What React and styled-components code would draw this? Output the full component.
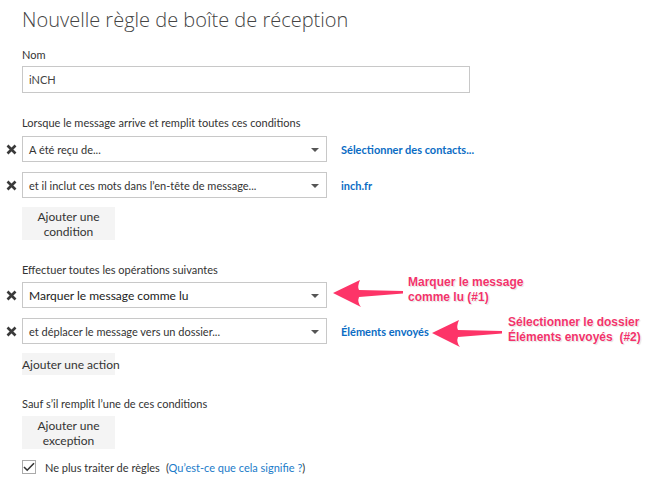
import React from 'react';
import styled, { createGlobalStyle } from 'styled-components';

const GlobalStyle = createGlobalStyle`
  body {
    margin: 0;
    background: #fff;
    font-family: Lato, 'Open Sans', sans-serif;
    color: #333;
  }
`;

const Page = styled.div`
  position: relative;
  width: 670px;
  height: 495px;
  padding: 5px 0 0 22px;
  box-sizing: border-box;
  overflow: hidden;
`;

const Title = styled.h1`
  margin: 0;
  font-family: 'Open Sans', sans-serif;
  font-weight: 300;
  font-size: 20px;
  line-height: 30px;
  color: #444;
`;

const Label = styled.div`
  font-size: 11px;
  line-height: 16px;
  color: #333;
  margin-top: ${(p) => p.$top || 0}px;
`;

const TextInput = styled.div`
  width: 448px;
  height: 27px;
  box-sizing: border-box;
  border: 1px solid #c8c8c8;
  margin-top: 3px;
  padding-left: 6px;
  display: flex;
  align-items: center;
  font-size: 11px;
  color: #444;
`;

const Rows = styled.div`
  display: flex;
  flex-direction: column;
  gap: 10px;
  margin-top: ${(p) => p.$top || 5}px;
  margin-left: -22px;
`;

const Row = styled.div`
  display: flex;
  align-items: center;
  height: 26px;
`;

const Remove = styled.div`
  width: 22px;
  display: flex;
  justify-content: center;
  align-items: center;
`;

const Select = styled.div`
  position: relative;
  width: 305px;
  height: 26px;
  box-sizing: border-box;
  border: 1px solid #c8c8c8;
  padding-left: 6px;
  display: flex;
  align-items: center;
  font-size: ${(p) => (p.$big ? 12 : 11)}px;
  color: ${(p) => (p.$big ? '#222' : '#333')};

  &::after {
    content: '';
    position: absolute;
    right: 7px;
    top: 11px;
    border-left: 4px solid transparent;
    border-right: 4px solid transparent;
    border-top: 4px solid #555;
  }
`;

const SideLink = styled.a`
  margin-left: 14px;
  font-size: 11px;
  font-weight: 700;
  color: #0a6cc4;
  text-decoration: none;
`;

const Button = styled.div`
  width: 93px;
  box-sizing: border-box;
  background: #f4f4f4;
  text-align: center;
  font-size: 12px;
  line-height: 15px;
  color: #333;
  white-space: nowrap;
  padding: ${(p) => (p.$single ? '4px 0 3px' : '2px 0 1px')};
  margin-top: ${(p) => p.$top || 0}px;
`;

const CheckRow = styled.div`
  display: flex;
  align-items: center;
  margin-top: 11px;
  font-size: 11px;
  color: #333;
`;

const Box = styled.div`
  width: 14px;
  height: 14px;
  box-sizing: border-box;
  border: 1px solid #aaa;
  display: flex;
  align-items: center;
  justify-content: center;
  margin-right: 9px;
`;

const Help = styled.a`
  margin-left: 6px;
  color: #1a7bc9;
  text-decoration: none;
  span {
    color: #333;
  }
`;

const Overlay = styled.svg`
  position: absolute;
  left: 0;
  top: 0;
  pointer-events: none;
`;

const Note = styled.div`
  position: absolute;
  left: ${(p) => p.$x}px;
  top: ${(p) => p.$y}px;
  font-family: 'Liberation Sans', Arial, sans-serif;
  font-weight: 700;
  font-size: 12px;
  line-height: 15px;
  color: #f2336b;
  white-space: pre;
  text-shadow: 0 0 2px #fff, 0 0 1px #fff, 1px 1px 1px rgba(0, 0, 0, 0.15);
`;

const XIcon = () => (
  <svg width="11" height="11" viewBox="0 0 11 11">
    <path d="M1.5 1.5 L9.5 9.5 M9.5 1.5 L1.5 9.5" stroke="#3a3a3a" strokeWidth="2.6" />
  </svg>
);

const Arrow = ({ x, y, tail }) => (
  <path
    fill="#fd3468"
    d={`M${x} ${y} L${x + 27} ${y - 13} Q${x + 24} ${y - 6} ${x + 26} ${y - 3}
       L${tail} ${y - 2} L${tail} ${y + 0.5} L${x + 26} ${y + 4}
       Q${x + 24} ${y + 9} ${x + 28} ${y + 14} Z`}
  />
);

const Condition = ({ text, link, big }) => (
  <Row>
    <Remove><XIcon /></Remove>
    <Select $big={big}>{text}</Select>
    {link && <SideLink href="#">{link}</SideLink>}
  </Row>
);

export default function App() {
  return (
    <Page>
      <GlobalStyle />
      <Title>Nouvelle règle de boîte de réception</Title>
      <Label $top={12}>Nom</Label>
      <TextInput>iNCH</TextInput>

      <Label $top={22}>Lorsque le message arrive et remplit toutes ces conditions</Label>
      <Rows>
        <Condition text="A été reçu de..." link="Sélectionner des contacts..." />
        <Condition text="et il inclut ces mots dans l’en-tête de message..." link="inch.fr" />
      </Rows>
      <Button $top={9}>Ajouter une<br />condition</Button>

      <Label $top={22}>Effectuer toutes les opérations suivantes</Label>
      <Rows $top={4}>
        <Condition big text="Marquer le message comme lu" />
        <Condition text="et déplacer le message vers un dossier..." link="Éléments envoyés" />
      </Rows>
      <Button $top={9} $single>Ajouter une action</Button>

      <Label $top={21}>Sauf s’il remplit l’une de ces conditions</Label>
      <Button $top={4}>Ajouter une<br />exception</Button>

      <CheckRow>
        <Box>
          <svg width="12" height="10" viewBox="0 0 12 10">
            <path d="M1 5 L4.2 8.2 L11 1.2" stroke="#333" strokeWidth="1.6" fill="none" />
          </svg>
        </Box>
        Ne plus traiter de règles
        <Help href="#"><span>(</span>Qu’est-ce que cela signifie ?<span>)</span></Help>
      </CheckRow>

      <Overlay width="670" height="495">
        <Arrow x={333} y={293} tail={403} />
        <Arrow x={432} y={333} tail={502} />
      </Overlay>
      <Note $x={408} $y={275}>{'Marquer le message\ncomme lu (#1)'}</Note>
      <Note $x={508} $y={315}>{'Sélectionner le dossier\nÉléments envoyés  (#2)'}</Note>
    </Page>
  );
}
